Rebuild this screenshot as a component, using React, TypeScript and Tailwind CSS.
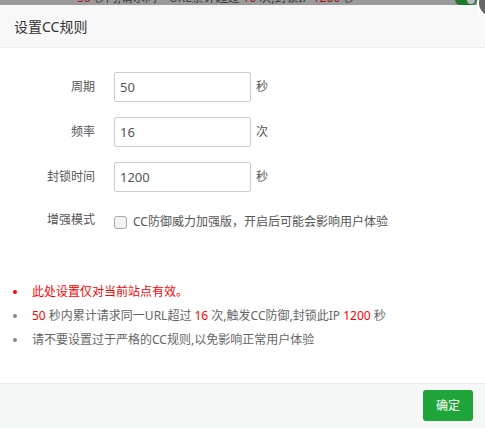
import React from "react";

const font = "font-['Noto_Sans','Noto_Sans_CJK_SC',sans-serif]";

const fields = [
  { label: "周期", value: "50", unit: "秒" },
  { label: "频率", value: "16", unit: "次" },
  { label: "封锁时间", value: "1200", unit: "秒" },
];

function Field({ label, value, unit }: { label: string; value: string; unit: string }) {
  return (
    <div className="flex h-[30px] items-center">
      <label className="w-[95px] text-right text-[12px] text-[#555]">{label}</label>
      <input
        defaultValue={value}
        className="ml-[19px] h-[30px] w-[137px] rounded-[2px] border border-[#ccc] bg-white px-[5px] text-[13px] text-[#555] outline-none"
      />
      <span className="ml-[5px] text-[12px] text-[#555]">{unit}</span>
    </div>
  );
}

export default function App() {
  return (
    <div className={`relative flex h-[428px] w-[485px] flex-col overflow-hidden bg-white ${font}`}>
      {/* dimmed page behind the layer */}
      <div className="relative h-[5px] shrink-0 overflow-hidden bg-[#9a9a9a]">
        <div className="-mt-[10px] flex pl-[77px] text-[12px] leading-[16px] text-[#3a3a3a] whitespace-nowrap">
          <span className="text-[#9a1a1a]">50</span>
          <span className="mx-[3px]">秒内,请求同一URL累计超过</span>
          <span className="text-[#9a1a1a]">16</span>
          <span className="mx-[3px]">次,封锁IP</span>
          <span className="text-[#9a1a1a]">1200</span>
          <span className="ml-[3px]">秒</span>
        </div>
        <span className="absolute left-[455px] -top-[6px] flex h-[11px] w-[22px] items-center justify-end rounded-full bg-[#1c7a30] pr-[2px]">
          <span className="h-[8px] w-[8px] rounded-full bg-[#bbb]" />
        </span>
      </div>

      <span className="absolute left-[477px] -top-[12px] h-[30px] w-[30px] rounded-full border-2 border-white bg-[#666]" />

      {/* header */}
      <div className="flex h-[43px] shrink-0 items-center border-b border-[#eee] bg-[#f8f8f8] pl-[14px] text-[14px] text-[#333]">
        设置CC规则
      </div>

      {/* body */}
      <div className="flex flex-1 flex-col pt-[24px]">
        <div className="flex flex-col gap-[15px]">
          {fields.map((f) => (
            <Field key={f.label} {...f} />
          ))}
          <div className="flex h-[30px] items-center">
            <label className="w-[95px] -mt-[4px] text-right text-[12px] text-[#555]">增强模式</label>
            <span className="ml-[19px] h-[13px] w-[13px] rounded-[3px] border border-[#aaa] bg-[#f3f3f3]" />
            <span className="ml-[6px] text-[12px] text-[#555]">CC防御威力加强版，开启后可能会影响用户体验</span>
          </div>
        </div>

        <ul className="mt-[43px] text-[12px] leading-[24px] text-[#666]">
          <li className="flex items-center">
            <span className="ml-[13px] h-[4px] w-[4px] rounded-full bg-[#f00]" />
            <span className="ml-[15px] text-[#f00]">此处设置仅对当前站点有效。</span>
          </li>
          <li className="flex items-center">
            <span className="ml-[13px] h-[4px] w-[4px] rounded-full bg-[#888]" />
            <span className="ml-[15px]">
              <span className="text-[#f00]">50</span> 秒内累计请求同一URL超过 <span className="text-[#f00]">16</span> 次,触发CC防御,封锁此IP{" "}
              <span className="text-[#f00]">1200</span> 秒
            </span>
          </li>
          <li className="flex items-center">
            <span className="ml-[13px] h-[4px] w-[4px] rounded-full bg-[#888]" />
            <span className="ml-[15px]">请不要设置过于严格的CC规则,以免影响正常用户体验</span>
          </li>
        </ul>
      </div>

      {/* footer */}
      <div className="flex h-[45px] shrink-0 items-start justify-end border-t border-[#eee] bg-[#f6f8f8] pr-[12px] pt-[6px]">
        <button className="h-[31px] w-[50px] rounded-[3px] bg-[#20a53a] text-[12px] text-white">确定</button>
      </div>
    </div>
  );
}
